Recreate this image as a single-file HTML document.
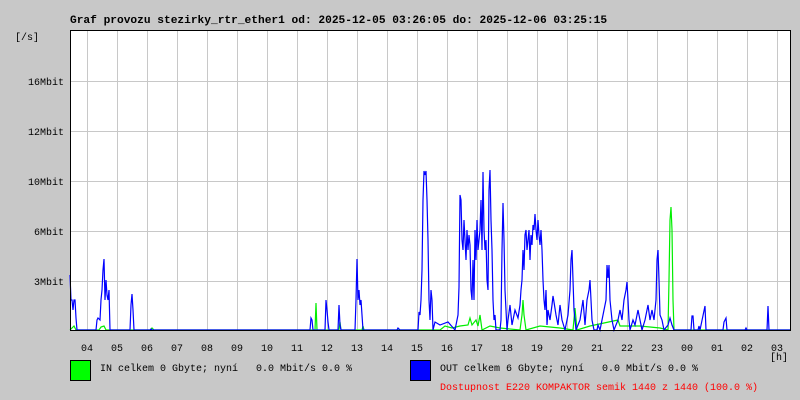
<!DOCTYPE html>
<html><head><meta charset="utf-8"><style>
body{margin:0;width:800px;height:400px;background:#c8c8c8;overflow:hidden}
svg{display:block}
text{font-family:"Liberation Mono","DejaVu Sans Mono",monospace;font-size:10px;white-space:pre}
</style></head><body>
<svg width="800" height="400" viewBox="0 0 800 400" xmlns="http://www.w3.org/2000/svg" xml:space="preserve">
<rect width="800" height="400" fill="#c8c8c8"/>
<text x="70" y="23" style="font-size:11.2px;font-weight:bold">Graf provozu stezirky_rtr_ether1 od: 2025-12-05 03:26:05 do: 2025-12-06 03:25:15</text>
<rect x="70" y="30" width="720" height="300" fill="#fff"/>
<g stroke="#c8c8c8" stroke-width="1">
<path d="M87.5 30V330M117.5 30V330M147.5 30V330M177.5 30V330M207.5 30V330M237.5 30V330M267.5 30V330M297.5 30V330M327.5 30V330M357.5 30V330M387.5 30V330M417.5 30V330M447.5 30V330M477.5 30V330M507.5 30V330M537.5 30V330M567.5 30V330M597.5 30V330M627.5 30V330M657.5 30V330M687.5 30V330M717.5 30V330M747.5 30V330M777.5 30V330"/>
<path d="M70 81.5H790M70 131.5H790M70 181.5H790M70 231.5H790M70 281.5H790"/>
</g>
<polyline fill="none" stroke="#00ee00" stroke-width="1.2" points="70,330 74,326 76,330 99,330 101,327 104,326 106,330 150,330 152,328 154,330 315,330 316,303 317,330 339,330 340,322 341,330 362,330 363,326 364,330 440,330 445,326 452,328 460,326 468,325 470,318 472,325 476,320 478,326 480,315 482,330 490,326 500,328 520,330 522,315 523,300 524,315 526,330 540,326 560,328 573,330 575,308 577,330 590,326 618,320 620,326 640,326 660,328 668,330 669,280 670,220 671,207 672,230 673,300 674,330 790,330"/>
<polyline fill="none" stroke="#0000ff" stroke-width="1.2" points="70,275 71,300 72,300 73,310 74,300 75,300 76,318 77,330 96,330 97,320 98,318 100,320 101,300 102,290 103,270 104,259 105,300 106,280 107,295 108,300 109,290 110,330 130,330 131,305 132,294 133,310 134,330 150,330 151,329 152,330 310,330 311,318 312,320 313,330 325,330 326,300 327,310 328,322 329,330 338,330 339,305 340,325 341,330 355,330 356,300 357,259 358,300 359,290 360,305 361,300 362,315 363,330 397,330 398,328 400,330 418,330 419,312 420,315 421,300 422,270 423,200 424,171 425,175 426,171 427,200 428,240 429,300 430,320 431,290 432,300 433,330 435,322 440,325 448,322 455,330 458,315 459,287 460,195 461,200 462,240 463,250 464,220 465,240 466,260 467,230 468,250 469,235 470,245 471,290 472,300 473,260 474,300 475,230 476,260 477,220 478,250 479,240 480,230 481,200 482,250 483,172 484,230 485,250 486,240 487,280 488,290 489,190 490,170 491,220 492,250 493,300 494,320 495,315 496,330 500,330 501,320 502,250 503,203 504,240 505,290 506,310 507,330 508,320 510,305 512,325 515,310 518,318 520,305 521,290 522,280 523,250 524,270 525,235 526,230 527,250 528,240 529,230 530,260 531,235 532,245 533,225 534,230 535,214 536,230 537,240 538,220 539,235 540,245 541,230 542,250 543,280 544,300 545,310 546,290 547,325 548,310 550,320 552,305 553,296 554,302 556,315 558,325 560,305 562,320 565,330 568,315 570,290 571,260 572,250 573,280 574,310 575,320 576,330 580,320 583,300 585,325 587,300 589,290 590,280 591,300 592,320 594,330 597,330 598,325 600,330 606,300 607,265 608,278 609,265 610,300 611,310 612,320 614,330 618,320 620,310 622,320 624,300 626,290 627,282 628,300 629,320 630,330 633,320 635,325 638,310 640,320 642,330 645,320 648,305 650,320 652,310 654,320 656,300 657,260 658,250 659,280 660,315 662,320 664,330 668,325 670,318 672,325 674,330 691,330 692,316 693,316 694,330 698,330 699,326 700,330 705,306 706,330 723,330 724,322 726,318 727,330 745,330 746,328 747,330 767,330 768,306 769,330 790,330"/>
<path d="M70.5 30V330.5H790.5V30.5H70" fill="none" stroke="#000" stroke-width="1"/>
<g text-anchor="end">
<text x="64" y="85">16Mbit</text><text x="64" y="135">12Mbit</text><text x="64" y="185">10Mbit</text><text x="64" y="235">6Mbit</text><text x="64" y="285">3Mbit</text>
</g>
<text x="15" y="40">[/s]</text>
<g text-anchor="middle">
<text x="87" y="351">04</text><text x="117" y="351">05</text><text x="147" y="351">06</text><text x="177" y="351">07</text><text x="207" y="351">08</text><text x="237" y="351">09</text><text x="267" y="351">10</text><text x="297" y="351">11</text><text x="327" y="351">12</text><text x="357" y="351">13</text><text x="387" y="351">14</text><text x="417" y="351">15</text><text x="447" y="351">16</text><text x="477" y="351">17</text><text x="507" y="351">18</text><text x="537" y="351">19</text><text x="567" y="351">20</text><text x="597" y="351">21</text><text x="627" y="351">22</text><text x="657" y="351">23</text><text x="687" y="351">00</text><text x="717" y="351">01</text><text x="747" y="351">02</text><text x="777" y="351">03</text>
</g>
<text x="770" y="360">[h]</text>
<rect x="70.5" y="360.5" width="20" height="20" fill="#00ff00" stroke="#000"/>
<text x="100" y="371">IN celkem 0 Gbyte; nyní   0.0 Mbit/s 0.0 %</text>
<rect x="410.5" y="360.5" width="20" height="20" fill="#0000ff" stroke="#000"/>
<text x="440" y="371">OUT celkem 6 Gbyte; nyní   0.0 Mbit/s 0.0 %</text>
<text x="440" y="390" fill="#ff0000">Dostupnost E220 KOMPAKTOR semik 1440 z 1440 (100.0 %)</text>
</svg>
</body></html>
